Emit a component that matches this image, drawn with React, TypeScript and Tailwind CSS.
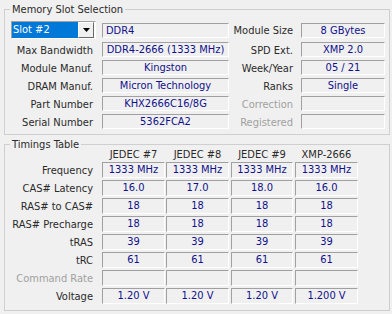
import React from "react";

// CPU-Z style "SPD" tab: slot selection + timings table

const font = "font-['DejaVu_Sans_Condensed','Liberation_Sans',sans-serif]";

type FieldProps = { children?: React.ReactNode; className?: string; left?: boolean };

const Field = ({ children, className = "", left }: FieldProps) => (
  <div
    className={`h-[15px] border border-t-[#a0a0a0] border-l-[#a0a0a0] border-b-white border-r-white leading-[13px] text-[#10108c] whitespace-nowrap overflow-hidden ${
      left ? "text-left pl-[3px]" : "text-center"
    } ${className}`}
  >
    {children}
  </div>
);

const Label = ({ children, className = "", off }: { children: React.ReactNode; className?: string; off?: boolean }) => (
  <div className={`text-right whitespace-nowrap leading-[15px] pt-[2px] ${off ? "text-[#a0a0a0]" : "text-[#2a2a2a]"} ${className}`}>
    {children}
  </div>
);

const SlotCombo = () => (
  <div className="flex w-[85px] h-[18px] border border-t-[#a0a0a0] border-l-[#a0a0a0] border-b-white border-r-white bg-white">
    <div className="w-[66px] h-[16px] bg-[#0078d7] text-white leading-[16px] pl-[1px]">Slot #2</div>
    <div className="w-[16px] h-[16px] flex items-center justify-center bg-[#f0f0f0] border border-t-white border-l-white border-b-[#696969] border-r-[#696969]">
      <svg width="7" height="4" viewBox="0 0 7 4">
        <path d="M0 0h7L3.5 4z" fill="#000" />
      </svg>
    </div>
  </div>
);

const slotRows = [
  { l: "Max Bandwidth", v: "DDR4-2666 (1333 MHz)", rl: "SPD Ext.", rv: "XMP 2.0" },
  { l: "Module Manuf.", v: "Kingston", rl: "Week/Year", rv: "05 / 21" },
  { l: "DRAM Manuf.", v: "Micron Technology", rl: "Ranks", rv: "Single" },
  { l: "Part Number", v: "KHX2666C16/8G", rl: "Correction", rv: "", off: true },
  { l: "Serial Number", v: "5362FCA2", rl: "Registered", rv: "", off: true },
];

const cols = [
  { name: "JEDEC #7", w: "w-[63px]", ml: "ml-[9px]" },
  { name: "JEDEC #8", w: "w-[63px]", ml: "ml-[1px]" },
  { name: "JEDEC #9", w: "w-[62px]", ml: "ml-[2px]" },
  { name: "XMP-2666", w: "w-[63px]", ml: "ml-[2px]" },
];

const timings = [
  { l: "Frequency", v: ["1333 MHz", "1333 MHz", "1333 MHz", "1333 MHz"] },
  { l: "CAS# Latency", v: ["16.0", "17.0", "18.0", "16.0"] },
  { l: "RAS# to CAS#", v: ["18", "18", "18", "18"] },
  { l: "RAS# Precharge", v: ["18", "18", "18", "18"] },
  { l: "tRAS", v: ["39", "39", "39", "39"] },
  { l: "tRC", v: ["61", "61", "61", "61"] },
  { l: "Command Rate", v: ["", "", "", ""], off: true },
  { l: "Voltage", v: ["1.20 V", "1.20 V", "1.20 V", "1.200 V"] },
];

export default function App() {
  return (
    <div className={`w-[392px] h-[314px] bg-[#f0f0f0] pt-[3px] text-[11px] overflow-hidden ${font}`}>
      <fieldset className="ml-[4px] w-[386px] border border-[#cfcfcf] pb-[3px]">
        <legend className="ml-[5px] px-[2px] leading-[13px] text-[#2a2a2a]">Memory Slot Selection</legend>
        <div className="flex h-[20px] items-start pl-[6px] mt-[5px]">
          <SlotCombo />
          <Field left className="ml-[6px] w-[127px] mt-[2px]">DDR4</Field>
          <Label className="w-[64px]">Module Size</Label>
          <Field className="ml-[8px] w-[84px] mt-[2px]">8 GBytes</Field>
        </div>
        {slotRows.map((r) => (
          <div key={r.l} className="flex h-[18px] items-start">
            <Label className="w-[88px]">{r.l}</Label>
            <Field className="ml-[9px] w-[127px] mt-[1px]">{r.v}</Field>
            <Label className="w-[64px]" off={r.off}>{r.rl}</Label>
            <Field className="ml-[8px] w-[84px] mt-[1px]">{r.rv}</Field>
          </div>
        ))}
      </fieldset>

      <fieldset className="ml-[4px] mt-[3px] w-[386px] border border-[#cfcfcf] pb-[6px]">
        <legend className="ml-[5px] px-[2px] leading-[13px] text-[#2a2a2a]">Timings Table</legend>
        <div className="flex h-[13px] -mt-[3px] leading-[13px] text-[#2a2a2a]">
          <div className="w-[88px]" />
          {cols.map((c) => (
            <div key={c.name} className={`${c.ml} ${c.w} text-center whitespace-nowrap`}>
              {c.name}
            </div>
          ))}
        </div>
        <div className="flex flex-col gap-[2px] mt-[1px]">
          {timings.map((t) => (
            <div key={t.l} className="flex h-[16px]">
              <div className={`w-[88px] text-right leading-[16px] pt-[1px] whitespace-nowrap ${t.off ? "text-[#a0a0a0]" : "text-[#2a2a2a]"}`}>
                {t.l}
              </div>
              {cols.map((c, i) => (
                <Field key={c.name} className={`${c.ml} ${c.w} !h-[16px] !leading-[14px]`}>
                  {t.v[i]}
                </Field>
              ))}
            </div>
          ))}
        </div>
      </fieldset>
    </div>
  );
}
